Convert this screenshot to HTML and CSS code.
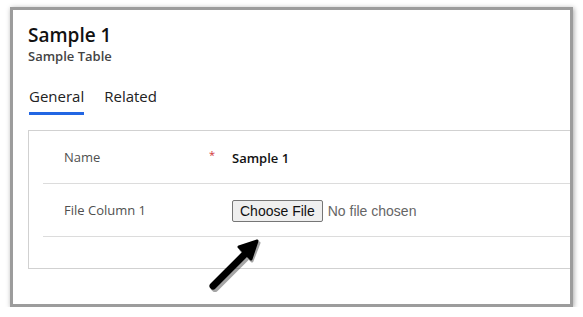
FILE: index.html
```html
<!DOCTYPE html>
<html lang="en">
<head>
    <meta charset="UTF-8">
    <meta name="viewport" content="width=device-width, initial-scale=1.0">
    <title>Sample 1</title>
    <link rel="stylesheet" href="styles.css">
</head>
<body>
    <div class="frame">
        <div class="header">
            <h1>Sample 1</h1>
            <div class="subtitle">Sample Table</div>
        </div>
        <div class="tabs">
            <span class="tab active">General</span>
            <span class="tab">Related</span>
        </div>
        <div class="card">
            <div class="row">
                <div class="label">Name</div>
                <div class="req">*</div>
                <div class="value">Sample 1</div>
            </div>
            <div class="row">
                <div class="label">File Column 1</div>
                <div class="req"></div>
                <div class="value"><input type="file" class="file"></div>
            </div>
        </div>
        <svg class="arrow" width="70" height="70" viewBox="0 0 70 70">
            <g transform="translate(2,2)" opacity="0.35" fill="#000" stroke="#000">
                <line x1="9" y1="59" x2="44" y2="24" stroke-width="8" stroke-linecap="round"/>
                <polygon points="53,14 35,21 46,32" stroke-width="3" stroke-linejoin="round"/>
            </g>
            <g fill="#000" stroke="#000">
                <line x1="9" y1="59" x2="44" y2="24" stroke-width="7" stroke-linecap="round"/>
                <polygon points="53,14 35,20 47,32" stroke-width="3" stroke-linejoin="round"/>
            </g>
        </svg>
    </div>
</body>
</html>
```

FILE: styles.css
```css
body {
    margin: 0;
    background: #fff;
    font-family: "Open Sans", "Noto Sans", sans-serif;
    color: #242424;
}
.frame {
    position: relative;
    margin: 7px 0 0 10px;
    width: 557px;
    height: 294px;
    border: 3px solid #9c9c9c;
    box-shadow: 1px 1px 5px rgba(0, 0, 0, 0.35);
    background: #fff;
    overflow: hidden;
}
.header {
    padding: 12px 0 0 15px;
}
h1 {
    margin: 0;
    font-size: 19px;
    font-weight: 600;
    line-height: 26px;
    color: #111;
}
.subtitle {
    font-size: 13px;
    font-weight: 600;
    line-height: 16px;
    color: #444;
}
.tabs {
    display: flex;
    gap: 20px;
    padding: 22px 0 0 16px;
}
.tab {
    font-size: 15px;
    line-height: 20px;
    padding-bottom: 6px;
    color: #222;
}
.tab.active {
    border-bottom: 3px solid #2266e3;
}
.card {
    margin: 15px 0 0 15px;
    width: 600px;
    height: 137px;
    border: 1px solid #d1d1d1;
    padding-left: 14px;
}
.row {
    display: flex;
    align-items: center;
    height: 52px;
    border-bottom: 1px solid #dcdcdc;
    font-size: 13px;
}
.label {
    width: 145px;
    padding-left: 21px;
    color: #505050;
}
.req {
    width: 23px;
    color: #d13438;
    font-size: 11px;
    margin-top: -6px;
}
.value {
    font-weight: 600;
    color: #111;
    padding-top: 2px;
}
.file {
    font-family: "Liberation Sans", Arial, sans-serif;
    font-size: 14px;
    font-weight: 400;
    color: #666;
}
.file::file-selector-button {
    font-family: "Liberation Sans", Arial, sans-serif;
    font-size: 14px;
    color: #111;
    background: #efefef;
    border: 1px solid #767676;
    border-radius: 2px;
    padding: 2px 7px;
    margin-right: 5px;
}
.arrow {
    position: absolute;
    left: 191px;
    top: 217px;
}
```
